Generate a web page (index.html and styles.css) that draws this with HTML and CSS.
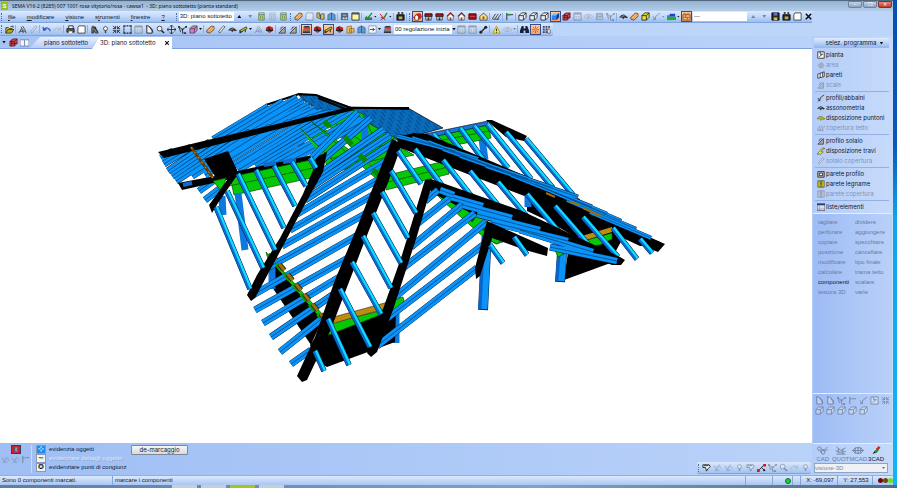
FILE: index.html
```html
<!DOCTYPE html>
<html lang="it">
<head>
<meta charset="utf-8">
<title>SEMA - piano sottotetto</title>
<link rel="stylesheet" href="styles.css">
</head>
<body>
<svg class="sprite" aria-hidden="true">
  <symbol id="folder" viewBox="0 0 10 10"><path d="M1 9V3h3l1 1h3v2" fill="#e8d33c" stroke="#333"/><path d="M1 9l2-4h7L7 9z" fill="#b8a818" stroke="#222" stroke-width=".8"/><path d="M6 2l3-1v2" stroke="#222" fill="none" stroke-width=".8"/></symbol>
  <symbol id="stamp" viewBox="0 0 10 10"><path d="M1 9l3-5 2 5M5 1l2 3 2 5M2 7h6M3 2l2 2" stroke="#444" fill="none"/><circle cx="7" cy="6" r="1.5" fill="#888"/></symbol>
  <symbol id="undo" viewBox="0 0 10 10"><path d="M2 5q4-4 7 1v1M1 2l1 4 3-1" stroke="#2748b8" fill="none" stroke-width="1.2"/></symbol>
  <symbol id="redo" viewBox="0 0 10 10"><path d="M8 5q-4-4-7 1v1M9 2l-1 4-3-1" stroke="#7d9bd8" fill="none" stroke-width="1.2"/></symbol>
  <symbol id="print" viewBox="0 0 10 10"><path d="M3 4V1h5v3" fill="#fff" stroke="#222"/><path d="M1 4h8v4H1z" fill="#555" stroke="#222"/><path d="M3 7h4v2H3z" fill="#fff"/></symbol>
  <symbol id="page" viewBox="0 0 10 10"><path d="M2 1h7v8H1V3z" fill="#fff" stroke="#333" stroke-width=".9"/></symbol>
  <symbol id="hand" viewBox="0 0 10 10"><path d="M2 9V3l1-2 2 3 1-2 1 3 2 4H6L4 6v3z" fill="#777" stroke="#222" stroke-width=".8"/><path d="M4 1l5 7" stroke="#222"/></symbol>
  <symbol id="bulb" viewBox="0 0 10 10"><circle cx="5" cy="4" r="2.2" fill="#fff" stroke="#444"/><path d="M5 6v3" stroke="#444" stroke-width="1.6"/></symbol>
  <symbol id="fit" viewBox="0 0 10 10"><path d="M1 1l3 3V1M9 1L6 4V1M1 9l3-3v3M9 9L6 6v3M1 4h3M6 4h3M1 6h3M6 6h3" stroke="#222" fill="none" stroke-width=".9"/></symbol>
  <symbol id="frame" viewBox="0 0 10 10"><path d="M1 3V1h2M7 1h2v2M9 7v2H7M3 9H1V7M4 1h2M4 9h2M1 4v2M9 4v2" stroke="#222" fill="none" stroke-width="1.2"/></symbol>
  <symbol id="doc" viewBox="0 0 10 10"><path d="M1 1h3M2 1v8h6V5L4 1" fill="#eef" stroke="#222"/><path d="M5 2l4 6" stroke="#222"/></symbol>
  <symbol id="mag" viewBox="0 0 10 10"><circle cx="4" cy="4" r="2.7" fill="#eef" stroke="#444"/><path d="M6 6l3 3" stroke="#222" stroke-width="1.6"/></symbol>
  <symbol id="move" viewBox="0 0 10 10"><path d="M5 0v10M0 5h10M3 2l2-2 2 2M3 8l2 2 2-2M2 3L0 5l2 2M8 3l2 2-2 2" stroke="#222" fill="none" stroke-width=".9"/></symbol>
  <symbol id="poly" viewBox="0 0 10 10"><path d="M1 2l4 3 4-3M5 5v4h3M1 2l2 6" stroke="#333" fill="none"/><path d="M0 1h2v2H0zM4 4h2v2H4zM8 1h2v2H8zM7 8h2v2H7z" fill="#333"/></symbol>
  <symbol id="cube" viewBox="0 0 10 10"><path d="M1 4l3-3h5v5L6 9H1zM1 4h5v5M6 4l3-3" fill="#e8eefa" stroke="#222" stroke-width=".9"/></symbol>
  <symbol id="bluecube" viewBox="0 0 10 10"><path d="M1 4l3-3h5v5L6 9H1z" fill="#2b83f4"/><path d="M1 4l3-3h5L6 4z" fill="#7cc4ff"/><path d="M6 4l3-3v5L6 9z" fill="#123a9a"/></symbol>
  <symbol id="pinkcube" viewBox="0 0 10 10"><path d="M1 4l3-3h5v5L6 9H1zM1 4h5v5M6 4l3-3" fill="#d77ac0" stroke="#444" stroke-width=".8"/></symbol>
  <symbol id="redcube" viewBox="0 0 10 10"><path d="M1 4l3-3h5v5L6 9H1zM1 4h5v5M6 4l3-3M2 6h7M3 2v7" fill="#d5455a" stroke="#511" stroke-width=".8"/></symbol>
  <symbol id="yelcube" viewBox="0 0 10 10"><path d="M1 4l3-3h5v5L6 9H1zM1 4h5v5M6 4l3-3" fill="#e5e02c" stroke="#222" stroke-width=".9"/></symbol>
  <symbol id="plank" viewBox="0 0 10 10"><path d="M1 6l5-5 3 1v3L4 9 1 8z" fill="#e5984a" stroke="#5b3212" stroke-width=".8"/><path d="M2 7l5-5M4 8l5-5" stroke="#f8ce94"/></symbol>
  <symbol id="beam" viewBox="0 0 10 10"><path d="M1 6l7-4 1 2-7 4z" fill="#c8cc20" stroke="#222" stroke-width=".8"/><path d="M1 6v3l3-2M7 5v3" stroke="#222" fill="none"/></symbol>
  <symbol id="slab" viewBox="0 0 10 10"><path d="M3 9L2 7l5-6 2 1z" fill="#eee" stroke="#444" stroke-width=".8"/></symbol>
  <symbol id="roof" viewBox="0 0 10 10"><path d="M0 6q3-4 6-3l4 3-2 1-2-1-1 2-2-2z" fill="#333"/><path d="M3 5l3-1" stroke="#aaa"/></symbol>
  <symbol id="house" viewBox="0 0 10 10"><path d="M1 5l4-4 4 4" fill="none" stroke="#a01616" stroke-width="1.3"/><path d="M2 5l3-3 3 3v4H2z" fill="#fff" stroke="#333" stroke-width=".7"/><path d="M4 6h2v3H4z" fill="#a33"/></symbol>
  <symbol id="redhouse" viewBox="0 0 10 10"><path d="M0 6l4-4 4-1 2 4-2 3H2z" fill="#c52a20"/><path d="M2 5l2-2 2 2v4H2z" fill="#fff" stroke="#511" stroke-width=".7"/></symbol>
  <symbol id="flathouse" viewBox="0 0 10 10"><path d="M1 2h8v3H1z" fill="#a51820" stroke="#400"/><path d="M2 5h6v4H2z" fill="#ddd" stroke="#222" stroke-width=".8"/><path d="M4 6h2v3H4z" fill="#333"/></symbol>
  <symbol id="redbox" viewBox="0 0 10 10"><path d="M1 2h8v6H1z" fill="#9d1520" stroke="#500"/><path d="M2 5h6" stroke="#e55" stroke-width=".7"/></symbol>
  <symbol id="mark" viewBox="0 0 10 10"><path d="M2 1h6v8H2z" fill="#4c5578"/><path d="M4 3h3M4 5h2M4 7h3" stroke="#e8ecf8"/></symbol>
  <symbol id="yelhouse" viewBox="0 0 10 10"><path d="M1 5l4-4 4 4v4H1z" fill="#f8e36a" stroke="#345" stroke-width=".9"/><path d="M4 5h2v3H4z" fill="#c23"/></symbol>
  <symbol id="hatch" viewBox="0 0 10 10"><path d="M0 8l4-6M3 8l4-6M6 8l4-6M1 8h7" stroke="#444" stroke-width="1"/></symbol>
  <symbol id="flag" viewBox="0 0 10 10"><path d="M2 1v8M2 3h7" stroke="#222"/><path d="M3 2h3v2H3z" fill="#2a3"/></symbol>
  <symbol id="bin" viewBox="0 0 10 10"><path d="M2 3h6v6H2z" fill="#e8de28" stroke="#575" stroke-width=".9"/><path d="M2 3V1h6v2M4 4v4M6 4v4" stroke="#585" fill="none" stroke-width=".9"/></symbol>
  <symbol id="win" viewBox="0 0 10 10"><path d="M1 1h8v8H1z" fill="#dde4ee" stroke="#333"/><path d="M1 2h8" stroke="#345" stroke-width="1.6"/><path d="M3 5h1M6 5h1M3 7h1M6 7h1" stroke="#333"/></symbol>
  <symbol id="split" viewBox="0 0 10 10"><path d="M0 2h10v7H0zM5 2v7" fill="#f2f6ff" stroke="#7486a8"/></symbol>
  <symbol id="grid" viewBox="0 0 10 10"><path d="M1 1h8v8H1z" fill="#567"/><path d="M3 3h4v1H3zM3 6h2v2H3zM6 6h2v2H6z" fill="#dde"/></symbol>
  <symbol id="note" viewBox="0 0 10 10"><path d="M1 1h8v8H1z" fill="#fff6a0" stroke="#333"/><path d="M1 2h8" stroke="#345" stroke-width="1.4"/></symbol>
  <symbol id="check" viewBox="0 0 10 10"><path d="M1 6h8v3H1z" fill="#567"/><path d="M2 5l2 2 5-6" stroke="#17a017" fill="none" stroke-width="1.5"/></symbol>
  <symbol id="checkred" viewBox="0 0 10 10"><path d="M2 6l3 1 4-6" stroke="#17a017" fill="none" stroke-width="1.5"/><path d="M1 2l6 7M7 5L2 9" stroke="#c22" stroke-width="1.1"/></symbol>
  <symbol id="save" viewBox="0 0 10 10"><path d="M1 1h8v8H1z" fill="#2b2b22" stroke="#111"/><path d="M3 1h4v3H3z" fill="#6d6ae8"/><path d="M3 6h4v3H3z" fill="#c8bf60"/></symbol>
  <symbol id="savedark" viewBox="0 0 10 10"><path d="M1 3h8v6H1z" fill="#2b2b22" stroke="#111"/><path d="M2 0h2v3H2zM6 0h2v3H6z" fill="#444"/><path d="M3 5h4v3H3z" fill="#b8b060"/></symbol>
  <symbol id="tools" viewBox="0 0 10 10"><path d="M1 1h3v4l2-3h3v6H6L1 6z" fill="#d8c050" stroke="#444" stroke-width=".8"/><path d="M5 3v5" stroke="#345"/></symbol>
  <symbol id="redtool" viewBox="0 0 10 10"><path d="M1 3l4-2 4 2v3L5 9 1 6z" fill="#d52020"/><path d="M1 6h8M3 2l4 5" stroke="#222" stroke-width="1.2"/></symbol>
  <symbol id="layers" viewBox="0 0 10 10"><path d="M1 3h8l-1-2H3zM1 5h8v1H1zM1 7h8v2H1z" fill="#333"/><path d="M2 4h7" stroke="#c22"/></symbol>
  <symbol id="sheet" viewBox="0 0 10 10"><path d="M1 2l5-1v8H1zM4 4h5v4H4z" fill="#e8c060" stroke="#a06020" stroke-width=".8"/></symbol>
  <symbol id="bluesheet" viewBox="0 0 10 10"><path d="M1 3l4-2v7L1 9zM5 1l4 2v6H5z" fill="#5d9bd0" stroke="#456" stroke-width=".7"/></symbol>
  <symbol id="step" viewBox="0 0 10 10"><path d="M1 9l7-7v7zM3 3l3-1M2 5l2-1" fill="#a8a8a8" stroke="#444"/></symbol>
  <symbol id="ystep" viewBox="0 0 10 10"><path d="M0 9l7-8 3 1-3 1-2 3h3L5 9z" fill="#e8ea30" stroke="#555" stroke-width=".8"/></symbol>
  <symbol id="arrowbox" viewBox="0 0 10 10"><path d="M1 1h8v8H1z" fill="#fff" stroke="#89a"/><path d="M2 5h5M5 3l2 2-2 2" stroke="#246" fill="none"/></symbol>
  <symbol id="wrench" viewBox="0 0 10 10"><path d="M2 8l5-5" stroke="#222" stroke-width="1.5"/><circle cx="2" cy="8" r="1.6" fill="#222"/><circle cx="7.500" cy="2.500" r="1.700" fill="#222"/></symbol>
  <symbol id="warn" viewBox="0 0 10 10"><path d="M5 1l4 8H1z" fill="#ffe92c" stroke="#a89010" stroke-width=".8"/><path d="M5 4v3M5 8v.8" stroke="#222"/></symbol>
  <symbol id="eye" viewBox="0 0 10 10"><path d="M0 5q5-5 10 0q-5 5-10 0" fill="#ccd" stroke="#888"/><circle cx="5" cy="5" r="1.4" fill="#888"/></symbol>
  <symbol id="bino" viewBox="0 0 10 10"><path d="M2 1h2v3h2V1h2l2 5v3H6V6H4v3H0V6z" fill="#182038"/></symbol>
  <symbol id="star" viewBox="0 0 10 10"><path d="M5 1v8M1 5h8M2 2l6 6M8 2L2 8" stroke="#b04c22" stroke-width=".8"/><circle cx="5" cy="5" r="2" fill="#e88f58"/></symbol>
  <symbol id="dots" viewBox="0 0 10 10"><path d="M1 1h2v2H1zM4 1h2v2H4zM7 1h2v2H7zM1 4h2v2H1zM4 4h2v2H4zM1 7h2v2H1zM4 7h2v2H4z" fill="#445"/><path d="M7 4l2 1v4H6z" fill="#fff" stroke="#222" stroke-width=".6"/></symbol>
  <symbol id="wall" viewBox="0 0 10 10"><path d="M1 3h8v6H1z" fill="#efb480" stroke="#a0522a"/><path d="M1 3l2-2 2 2 2-2 2 2M1 6h8M4 3v3M6 6v3" stroke="#a0522a" fill="none" stroke-width=".8"/></symbol>
  <symbol id="land" viewBox="0 0 10 10"><path d="M0 5h10v4H0z" fill="#19b425"/><path d="M0 4h3V2h6v3H0z" fill="#1c3fe0"/></symbol>
  <symbol id="close" viewBox="0 0 10 10"><path d="M2 2l6 6M8 2L2 8" stroke="#111" stroke-width="1.8"/></symbol>
  <symbol id="plus" viewBox="0 0 10 10"><path d="M1 3l3 4 2-4 3 3M2 8h5" stroke="#555" fill="none"/><circle cx="7" cy="3" r="1.4" fill="#999"/></symbol>
  <symbol id="glove" viewBox="0 0 10 10"><path d="M1 2h7l1 2-2 2-2 3-1-4H1z" fill="#fff" stroke="#222"/><path d="M2 3h5" stroke="#222"/></symbol>
  <symbol id="node" viewBox="0 0 10 10"><path d="M2 8l6-6M5 5l4 4" stroke="#222"/><path d="M7 1h3v3H7zM0 7h3v3H0z" fill="#d11"/><path d="M7 7h2v2H7z" fill="#111"/></symbol>
  <symbol id="plan" viewBox="0 0 10 10"><path d="M1 1h8v8H1z" fill="#fff" stroke="#222"/><path d="M4 1v3h3M3 7l4-3" stroke="#222" fill="none"/></symbol>
  <symbol id="panel" viewBox="0 0 10 10"><path d="M1 4l8-3v6L1 9zM4 3v5M7 2v5" fill="#fff" stroke="#222"/></symbol>
  <symbol id="chalet" viewBox="0 0 10 10"><path d="M0 6l4-4h3l3 4H8v3H2V6z" fill="#7a86a0"/></symbol>
  <symbol id="curve" viewBox="0 0 10 10"><path d="M1 9q4-1 3-4l5-4M1 5l3 4" stroke="#222" fill="none"/></symbol>
  <symbol id="yroof" viewBox="0 0 10 10"><path d="M0 6q3-4 6-3l4 3-2 1-2-1-1 2-2-2z" fill="#b5b818" stroke="#553" stroke-width=".6"/></symbol>
  <symbol id="wallbox" viewBox="0 0 10 10"><path d="M1 2h8v7H1z" fill="#bbb" stroke="#222"/><path d="M3 4h4v3H3z" fill="#fff" stroke="#222"/></symbol>
  <symbol id="ywall" viewBox="0 0 10 10"><path d="M1 1h8v8H1z" fill="#d3cf20" stroke="#554"/><path d="M4 1v8M6 1v8M4 4h2" stroke="#443" stroke-width=".9"/></symbol>
  <symbol id="table" viewBox="0 0 10 10"><path d="M0 1h10v8H0z" fill="#fff" stroke="#334"/><path d="M0 2h10" stroke="#23408e" stroke-width="2"/><path d="M0 5h10M0 7h10M3 3v6" stroke="#889" stroke-width=".7"/></symbol>
  <symbol id="pen" viewBox="0 0 10 10"><path d="M1 9l3-4 2 2z" fill="#111"/><path d="M3 6l3-3 2 2-3 3z" fill="#159a20"/><path d="M5 3l3-3 2 2-3 3z" fill="#d82020"/></symbol>
  <symbol id="cad" viewBox="0 0 14 10"><circle cx="3" cy="3" r="2" fill="none" stroke="#7080a0"/><circle cx="7" cy="7" r="2" fill="none" stroke="#7080a0"/><path d="M5 4h4l3-3M8 6l4-2M3 5l3 3" stroke="#7080a0" fill="none"/></symbol>
  <symbol id="quot" viewBox="0 0 14 10"><path d="M2 1l5 4 5-3M1 5l5 2 6-1M2 9h10M4 3v5M9 3v6" stroke="#7080a0" fill="none"/></symbol>
  <symbol id="mcad" viewBox="0 0 14 10"><path d="M1 5l3-3h6l3 3-3 3H4zM4 2v6M7 1v8M10 2v6M1 5h12" stroke="#7080a0" fill="none"/></symbol>
</svg>

<div class="screen">
<div class="app">
  <header class="title">
    <span class="logo">S</span><h1>SEMA V16-2 (8285) 007 1001 rosa vitytorio/rosa - cawsa1&nbsp; - 3D: piano sottotetto (pianta standard)</h1>
    <div class="winbtns"><button aria-label="Riduci">–</button><button aria-label="Ripristina">❐</button><button class="x" aria-label="Chiudi">✕</button></div>
  </header>

  <div class="bar">
    <i class="grip"></i>
    <nav class="menu"><a href="#"><u>f</u>ile</a><a href="#"><u>m</u>odificare</a><a href="#"><u>v</u>isione</a><a href="#">s<u>t</u>rumenti</a><a href="#"><u>f</u>inestre</a><a href="#"><u>?</u></a></nav>
    <i class="grip"></i>
    <input class="field view" aria-label="Vista" value="3D: piano sottotetto">
    <button class="b" aria-label="Su"><i class="tri up"></i></button><button class="b off" aria-label="Giù"><i class="tri"></i></button>
    <button class="b"><svg><use href="#bin"/></svg></button><button class="b off"><svg><use href="#bin"/></svg></button><button class="b"><svg><use href="#bin"/></svg></button>
    <i class="grip"></i>
    <button class="b"><svg><use href="#plank"/></svg></button><button class="b off"><svg><use href="#page"/></svg></button><button class="b"><svg><use href="#tools"/></svg></button><button class="b"><svg><use href="#bluesheet"/></svg></button>
    <i class="sep"></i>
    <button class="b"><svg><use href="#grid"/></svg></button><button class="b"><svg><use href="#note"/></svg></button>
    <i class="sep"></i>
    <button class="b drop"><svg><use href="#check"/></svg><i class="tri"></i></button><button class="b drop"><svg><use href="#checkred"/></svg><i class="tri"></i></button>
    <i class="sep"></i><button class="b"><svg><use href="#savedark"/></svg></button>
    <i class="sep"></i><i class="grip"></i>
    <button class="b on"><svg><use href="#redhouse"/></svg></button><button class="b"><svg><use href="#flathouse"/></svg></button><button class="b"><svg><use href="#flathouse"/></svg></button><button class="b"><svg><use href="#house"/></svg></button><button class="b"><svg><use href="#house"/></svg></button><button class="b"><svg><use href="#redbox"/></svg></button><button class="b"><svg><use href="#yelhouse"/></svg></button>
    <i class="sep"></i><button class="b"><svg><use href="#hatch"/></svg></button>
    <i class="sep"></i><button class="b"><svg><use href="#flag"/></svg></button>
    <i class="sep"></i><button class="b"><svg><use href="#cube"/></svg></button><button class="b"><svg><use href="#cube"/></svg></button><button class="b"><svg><use href="#cube"/></svg></button><button class="b on"><svg><use href="#bluecube"/></svg></button><button class="b"><svg><use href="#redcube"/></svg></button>
    <button class="b off"><svg><use href="#win"/></svg></button><button class="b off"><svg><use href="#eye"/></svg></button><button class="b off"><svg><use href="#grid"/></svg></button><button class="b off"><svg><use href="#poly"/></svg></button>
    <i class="sep"></i><button class="b"><svg><use href="#roof"/></svg></button><button class="b"><svg><use href="#plank"/></svg></button><button class="b"><svg><use href="#yelcube"/></svg></button><button class="b drop off"><svg><use href="#curve"/></svg><i class="tri"></i></button><button class="b drop"><svg><use href="#land"/></svg><i class="tri"></i></button><button class="b on"><svg><use href="#wall"/></svg></button>
    <input class="field line" aria-label="Linea" value="---">
    <button class="b off" aria-label="Su"><i class="tri up"></i></button><button class="b off" aria-label="Giù"><i class="tri"></i></button>
    <button class="b"><svg><use href="#save"/></svg></button><button class="b"><svg><use href="#savedark"/></svg></button><button class="b"><svg><use href="#page"/></svg></button><button class="b" aria-label="Chiudi"><svg><use href="#close"/></svg></button>
  </div>

  <div class="bar second">
    <i class="grip"></i>
    <button class="b"><svg><use href="#folder"/></svg></button><i class="sep"></i>
    <button class="b"><svg><use href="#stamp"/></svg></button><button class="b off"><svg><use href="#slab"/></svg></button><i class="sep"></i>
    <button class="b"><svg><use href="#undo"/></svg></button><button class="b off"><svg><use href="#redo"/></svg></button><i class="sep"></i>
    <button class="b"><svg><use href="#print"/></svg></button><button class="b"><svg><use href="#page"/></svg></button><i class="sep"></i>
    <button class="b"><svg><use href="#hand"/></svg></button><button class="b"><svg><use href="#bulb"/></svg></button><button class="b"><svg><use href="#fit"/></svg></button><button class="b"><svg><use href="#frame"/></svg></button><button class="b off"><svg><use href="#win"/></svg></button><button class="b"><svg><use href="#doc"/></svg></button><button class="b"><svg><use href="#mag"/></svg></button><button class="b"><svg><use href="#move"/></svg></button><button class="b"><svg><use href="#poly"/></svg></button>
    <button class="b drop"><svg><use href="#pinkcube"/></svg><i class="tri"></i></button><i class="sep"></i>
    <button class="b"><svg><use href="#plank"/></svg></button><button class="b"><svg><use href="#slab"/></svg></button><button class="b"><svg><use href="#roof"/></svg></button><button class="b drop"><svg><use href="#beam"/></svg><i class="tri"></i></button><button class="b off"><svg><use href="#stamp"/></svg></button><button class="b"><svg><use href="#redtool"/></svg></button><i class="sep"></i>
    <button class="b"><svg><use href="#step"/></svg></button><button class="b"><svg><use href="#step"/></svg></button><i class="sep"></i>
    <button class="b on"><svg><use href="#layers"/></svg></button><button class="b"><svg><use href="#redtool"/></svg></button><button class="b on"><svg><use href="#beam"/></svg></button><button class="b"><svg><use href="#redtool"/></svg></button><button class="b"><svg><use href="#sheet"/></svg></button>
    <button class="b"><svg><use href="#bluesheet"/></svg></button><button class="b drop"><svg><use href="#arrowbox"/></svg><i class="tri"></i></button><button class="b"><svg><use href="#layers"/></svg></button>
    <select class="field preset" aria-label="Regolazione"><option>00 regolazione inizia</option></select><i class="tri"></i>
    <button class="b off"><svg><use href="#win"/></svg></button><button class="b off"><svg><use href="#win"/></svg></button><button class="b"><svg><use href="#wrench"/></svg></button><i class="sep"></i>
    <button class="b"><svg><use href="#warn"/></svg></button><button class="b drop off"><svg><use href="#eye"/></svg><i class="tri"></i></button><i class="sep"></i>
    <button class="b"><svg><use href="#bino"/></svg></button><button class="b on"><svg><use href="#star"/></svg></button><button class="b"><svg><use href="#dots"/></svg></button>
  </div>

  <div class="body">
    <main class="work">
      <div class="tabs">
        <i class="tri"></i><button class="b"><svg><use href="#redcube"/></svg></button><button class="b"><svg><use href="#split"/></svg></button>
        <button class="tab"><span>piano sottotetto</span></button>
        <button class="tab active"><span>3D: piano sottotetto</span><svg><use href="#close"/></svg></button>
      </div>

      <div class="canvas">
      <svg class="model" viewBox="0 49 812 394" role="img" aria-label="Modello 3D della copertura">
        <defs>
          <pattern id="dense" width="9" height="4" patternUnits="userSpaceOnUse" patternTransform="rotate(14)"><rect width="9" height="4" fill="#0a90f4"/><path d="M0 1h9M0 3h9" stroke="#02284e" stroke-width=".7"/><path d="M1 0l5 4" stroke="#014" stroke-width=".5"/></pattern>
          <path id="backRafters" d="M268 106L213 139M283 101L222 138M297 97L236 134M303 100L250 131M309 104L264 128M315 108L279 125M322 111L293 121M331 112L308 118"/>
          <path id="leftRafters" d="M173 151L161 158M191 147L164 164M210 142L168 171M230 137L172 176M250 132L176 181M270 127L192 176M290 122L205 175M312 117L222 173M334 112L238 170M350 111L256 167M360 116L274 164M366 120L292 160M216 179L199 191M222 187L205 200"/>
          <path id="midRafters" d="M358 112L312 158M371 118L322 160M384 129L316 176M390 135L311 187M396 141L305 200M388 160L297 214M381 178L290 230M373 195L282 246M367 213L267 268M358 235L253 295M350 257L255 310M343 275L263 323M334 294L271 337M325 316L280 352M311 350L291 364"/>
          <path id="frontRafters" d="M438 190L425 201M451 197L418 223M463 204L411 247M475 213L403 268M486 222L395 297M483 245L385 320M477 268L377 346"/>
          <path id="leftJacks" d="M216 207L250 289M227 191L263 268M238 174L275 250M256 170L284 228M274 166L295 206M292 162L306 186M310 158L316 168"/>
          <path id="centreJacks" d="M398 151L421 184M391 171L416 213M382 192L408 238M373 213L401 263M363 236L391 288M352 262L381 314M340 289L370 347M328 319L349 365M315 351L324 371"/>
          <path id="rightJacks" d="M415 149L443 187M443 160L472 197M470 171L501 209M498 182L529 219M527 194L560 233M555 206L588 244M583 217L618 257M613 228L637 259M640 239L652 253"/>
          <path id="backJacks" d="M433 134L441 143M446 131L461 150M460 128L484 161M474 126L508 168M487 124L531 179M506 132L553 188M526 139L573 195"/>
          <path id="dormerJacks" d="M490 245L503 263M514 237L527 255"/>
          <path id="valley" d="M397 136L455 151M412 138L478 159M428 142L503 171M443 149L528 179M460 156L553 188M486 166L578 197M511 175L592 207M535 184L607 214M551 191L621 221M567 200L636 229M590 212L651 238"/>
          <path id="dormerRight" d="M440 190L454 195M451 197L483 206M463 205L512 218M477 214L540 230M491 222L568 241M520 230L593 252M550 247L617 261"/>
        </defs>
        <path d="M299 95L316 95L350 107L408 108L443 128L418 135L398 140L370 124L347 110L322 113L303 100z" fill="url(#dense)" stroke="#000" stroke-width=".7"/>
        <path d="M266 105L299 94L316 95L351 108L409 108M318 98L348 110M375 108L409 109" stroke="#000" stroke-width="2" fill="none"/>
        <path class="green" d="M302 124L315 119L352 157L334 171zM330 120L350 113L397 139L386 153L372 148zM353 110L363 114L391 176L380 174L318 116zM208 148L246 140L214 156z"/>
        <path d="M300 125L302 159M364 119L366 147" class="post"/>
        <use href="#backRafters" class="bo"/><use href="#backRafters" class="bf"/><use href="#backRafters" class="bl"/>
        <use href="#leftRafters" class="bo wide"/><use href="#leftRafters" class="bf"/><use href="#leftRafters" class="bl"/>
        <path d="M158 152L212 139L350 107L354 110L342 113L212 146L164 158z"/>
        <path d="M204 159L228 151L238 172L216 178zM178 183L215 176L270 164L327 152L327 160L240 177L182 190z"/>
        <path d="M191 147L213 178" stroke="#5f3f08" stroke-width="3"/><path d="M191 147L213 178" stroke="#b18218" stroke-width="1.2" stroke-dasharray="2 4"/>
        <path d="M183 185L192 183M264 165L276 163M283 162L296 160" stroke="#1469d0" stroke-width="4"/>
        <path class="green" d="M230 177L315 159L320 176L234 195zM229 186L318 167"/>
        <path class="green" d="M213 181L226 178L222 192z"/>
        <path class="green" d="M325 160L394 143L400 153L329 174zM388 175L449 160L449 174L386 190z"/><path class="green" d="M388 182L448 167M401 148L414 155L400 158z"/>
        <path d="M238 193L245 250M222 196L223 215" class="post"/>
        <path d="M230 176L238 174L218 203L212 213L209 205z"/>
        <path class="green" d="M266 252L324 316L320 324L270 266z"/>
        <path d="M272 262L322 320L311 345L272 287z"/>
        <path class="post" d="M272 268V289M396 313V343"/>
        <path class="green" d="M300 128L340 168L335 174M312 122L384 176L380 182z"/>
        <use href="#midRafters" class="bo wide"/><use href="#midRafters" class="bf"/><use href="#midRafters" class="bl"/>
        <path d="M345 137L352 145M359 155L366 161M373 170L381 177M324 121L330 127" stroke="#068a06" stroke-width="5"/>
        <path d="M268 254L321 318" stroke="#0a9e0a" stroke-width="4" stroke-dasharray="8 5"/><path d="M271 254L324 318" stroke="#3a2605" stroke-width="5" stroke-dasharray="8 5"/><path d="M271 254L324 318" stroke="#94700f" stroke-width="3" stroke-dasharray="8 5"/>
        <path d="M310 345L328 322L396 310L395 342L327 367L316 361z"/>
        <path class="green" d="M326 336L329 323L393 308L391 300L403 297L404 301L394 312L380 315z"/>
        <path d="M330 318L392 301L391 307L331 324z" fill="#bd8c10" stroke="#432" stroke-width=".7"/>
        <path d="M319 156L327 152L323 172L304 206L283 246L255 298L251 301L247 295L257 275L280 238L303 194z"/>
        <use href="#leftJacks" class="co"/><use href="#leftJacks" class="cf"/><use href="#leftJacks" class="cc" x=".9" y="-.5"/>

        <path d="M482 139L485 160" class="post"/>
        <path class="green" d="M434 135L488 124L491 138L446 147zM438 141L489 131"/>
        <path d="M425 134L488 121L488 125L428 138z" fill="#1976dd" stroke="#000" stroke-width=".6"/>
        <path d="M486 120L492 120L527 136L524 141L506 137z"/>
        <use href="#backJacks" class="co"/><use href="#backJacks" class="cf"/><use href="#backJacks" class="cc" x=".9" y="-.5"/>
        <path d="M414 133L427 134L580 199L577 205L665 244L658 252L640 245L527 197L398 147L397 137z"/>
        <path d="M527 192L660 242L640 246L623 238L612 258L546 220L527 211z"/>
        <path d="M528 195V207" class="post"/>
        <use href="#valley" class="vo"/><use href="#valley" class="vf"/><use href="#valley" class="vl"/>
        <path d="M546 193L555 197M570 202L580 205M583 208L601 216" stroke="#9b6d10" stroke-width="2"/>
        <path d="M575 238L612 227V232L580 242z" fill="#bd8c10"/><path class="green" d="M587 240L612 233V239L600 245L590 246z"/>
        <use href="#rightJacks" class="co"/><use href="#rightJacks" class="cf"/><use href="#rightJacks" class="cc" x=".9" y="-.5"/>

        <path d="M568 252L616 261L564 280z"/>
        <path class="postedge" d="M562 253L560 282M487 230L483 310"/><path class="post tall" d="M562 253L560 281M487 230L483 309"/><path class="postside" d="M559 253L557 281M484 230L480 309"/>
        <path class="green" d="M434 192L447 191L504 234L503 242L496 244L480 234L444 202z"/>
        <path class="green" d="M491 232L500 231L504 238L497 244L491 241zM555 250L564 254L558 257z"/>
        <path d="M445 197L496 236" stroke="#064f08" stroke-width="7" stroke-dasharray="5 11"/>
        <path d="M425 180L431 179L522 211L620 257L625 260L621 265L612 265L590 256L480 218L431 192z"/>
        <use href="#frontRafters" class="bo wide"/><use href="#frontRafters" class="bf"/><use href="#frontRafters" class="bl"/>
        <use href="#dormerRight" class="bo wide"/><use href="#dormerRight" class="bf"/><use href="#dormerRight" class="bl"/>
        <path d="M487 221L548 248L547 256L525 250L492 238L480 276L476 279L475 268z"/>
        <use href="#dormerJacks" class="co"/><use href="#dormerJacks" class="cf"/><use href="#dormerJacks" class="cc" x=".9" y="-.5"/>
        <path d="M425 180L433 181L417 236L393 310L377 352L371 357L367 353L382 312L402 255z"/>
        <path d="M392 139L402 144L389 180L362 248L331 329L307 380L302 382L297 376L315 337L335 280L358 225z"/>
        <use href="#centreJacks" class="co"/><use href="#centreJacks" class="cf"/><use href="#centreJacks" class="cc" x=".9" y="-.5"/>
      </svg>
      </div>

      <section class="marks">
        <div class="mode"><button class="red" aria-label="Marca"><svg><use href="#mark"/></svg></button><div class="minis off"><svg><use href="#plus"/></svg><svg><use href="#plus"/></svg><svg><use href="#flag"/></svg></div></div>
        <div class="opts">
          <button class="opt"><span class="box sel">⊹</span>evidenzia oggetti</button>
          <button class="opt dim"><span class="box">~</span>evidenziare dettagli oggetto</button>
          <button class="opt"><span class="box">✪</span>evidenziare punti di congiunz</button>
        </div>
        <button class="demark">de-marcaggio</button>
        <div class="snap"><i class="grip"></i><button class="b"><svg><use href="#glove"/></svg></button><button class="b off"><svg><use href="#plus"/></svg></button><button class="b off"><svg><use href="#plus"/></svg></button><button class="b off"><svg><use href="#bulb"/></svg></button><button class="b off"><svg><use href="#glove"/></svg></button><button class="b"><svg><use href="#node"/></svg></button><button class="b off"><svg><use href="#poly"/></svg></button><button class="b off"><svg><use href="#mag"/></svg></button><button class="b off"><svg><use href="#redo"/></svg></button><button class="b off"><svg><use href="#bulb"/></svg></button></div>
      </section>
    </main>

    <aside class="side">
      <button class="prog">selez. programma<i class="tri"></i></button>
      <ul><li><a href="#"><svg><use href="#plan"/></svg>pianta</a></li><li class="dim"><a href="#"><svg><use href="#chalet"/></svg>area</a></li><li><a href="#"><svg><use href="#panel"/></svg>pareti</a></li><li class="dim"><a href="#"><svg><use href="#step"/></svg>scale</a></li></ul>
      <ul><li><a href="#"><svg><use href="#curve"/></svg>profili/abbaini</a></li><li><a href="#"><svg><use href="#roof"/></svg>assonometria</a></li><li><a href="#"><svg><use href="#yroof"/></svg>disposizione puntoni</a></li><li class="dim"><a href="#"><svg><use href="#hatch"/></svg>copertura tetto</a></li></ul>
      <ul><li><a href="#"><svg><use href="#step"/></svg>profilo solaio</a></li><li><a href="#"><svg><use href="#ystep"/></svg>disposizione travi</a></li><li class="dim"><a href="#"><svg><use href="#slab"/></svg>solaio copertura</a></li></ul>
      <ul><li><a href="#"><svg><use href="#wallbox"/></svg>parete profilo</a></li><li><a href="#"><svg><use href="#ywall"/></svg>parete legname</a></li><li class="dim"><a href="#"><svg><use href="#ywall"/></svg>parete copertura</a></li></ul>
      <ul><li><a href="#"><svg><use href="#table"/></svg>liste/elementi</a></li></ul>
      <div class="cmds">
        <button>tagliare</button><button>dividere</button><button>perforare</button><button>aggiungere</button><button>copiare</button><button>specchiare</button><button>posizione</button><button>cancellare</button><button>modificare</button><button>tipo finale</button><button>calcolare</button><button>trama tetto</button><button class="cur">componenti</button><button>scalare</button><button>testura 3D</button><button>varie</button>
      </div>
      <div class="draw off"><svg><use href="#doc"/></svg><svg><use href="#doc"/></svg><svg><use href="#poly"/></svg><svg><use href="#flag"/></svg><svg><use href="#curve"/></svg><svg><use href="#plan"/></svg><svg><use href="#fit"/></svg><svg><use href="#cube"/></svg><svg><use href="#cube"/></svg><svg><use href="#cube"/></svg><svg><use href="#cube"/></svg><svg><use href="#cube"/></svg></div>
      <div class="cads"><button><svg><use href="#cad"/></svg>CAD</button><button><svg><use href="#quot"/></svg>QUOT</button><button><svg><use href="#mcad"/></svg>MCAD</button><button class="cur"><svg><use href="#pen"/></svg>3CAD</button></div>
      <div class="vis"><select aria-label="Visione"><option>visione-3D</option></select><i class="tri"></i></div>
    </aside>
  </div>

  <footer class="status"><span class="s1">Sono 0 componenti marcati.</span><span class="s2">marcare i componenti</span><span class="s3"></span><span class="s4"><i class="led"></i></span><span class="s5"></span><span class="s6">X: -69,097</span><span class="s7">Y: 27,553</span><span class="s8"><i></i><i></i><i></i></span></footer>
</div>
<div class="desk"></div>
<div class="task"><i></i><i></i><i class="lime"></i><i></i></div>
</div>
</body>
</html>
```

FILE: styles.css
```css
* { box-sizing: border-box; }
html, body { height: 100%; margin: 0; }
body { font: 6px/10px "Liberation Sans", Arial, sans-serif; color: #10182c; overflow: hidden; }
button, input, select { font: inherit; color: inherit; margin: 0; padding: 0; border: 0; background: none; border-radius: 0; appearance: none; white-space: nowrap; }
a { color: inherit; text-decoration: none; }
ul { list-style: none; margin: 0; padding: 0; }
svg { display: block; flex: none; width: 9px; height: 9px; }
.sprite { position: absolute; width: 0; height: 0; }

.screen { height: 100%; display: grid; grid-template: 1fr 3px / 1fr 4px; }
.app { display: flex; flex-direction: column; min-width: 0; min-height: 0; background: #bdd5f8; }
.desk { background: linear-gradient(#0950ae, #0b58b8 30%, #10a4e8 45%, #13b4f4); }
.task { grid-column: 1 / -1; background: linear-gradient(90deg, #5b7fa6, #7ea2c8 60%, #4f6a85); display: flex; gap: 4px; padding-left: 172px; }
.task i { width: 25px; background: #c4cfda; }
.task .lime { background: #a4c422; }

.title { height: 11px; display: flex; align-items: center; background: linear-gradient(#53687f 0, #53687f 1px, #93b2d2 1px, #b4cdea); padding-left: 1px; }
.title h1 { font: 5px/8px "Noto Sans", sans-serif; margin: 0; flex: 1; padding-left: 4px; color: #0c1018; white-space: nowrap; }
.logo { width: 7px; height: 8px; background: #98c01c; color: #fff; font: bold 6px/8px "Liberation Sans", sans-serif; text-align: center; }
.winbtns { display: flex; gap: 1px; align-self: flex-start; padding: 1px 1px 0 0; }
.winbtns button { width: 14px; height: 7px; font-size: 5px; line-height: 5px; color: #fff; background: linear-gradient(#c3d3e6, #8aa5c4); border: 1px solid #6b83a0; border-radius: 0 0 2px 2px; }
.winbtns .x { background: linear-gradient(#e08a7c, #c43a26); border-color: #7d3429; }

.bar { height: 12px; margin-right: 81px; display: flex; align-items: center; background: linear-gradient(#dbe9fe, #c1d8fa 50%, #9cbdee); border-bottom: 1px solid #7fa3dc; }
.second { height: 13px; align-self: flex-start; margin: 0; border-radius: 0 2px 2px 0; padding-right: 1px; }
.grip { flex: none; width: 2px; height: 8px; margin: 0 1px; border-left: 1px dotted #4a6db0; }
.sep { flex: none; width: 1px; height: 8px; background: #8fb0e4; margin-right: 1px; }
.menu { display: flex; gap: 11px; padding: 0 10px 0 4px; }
.field { background: #fff; height: 9px; line-height: 9px; padding-left: 1px; overflow: hidden; }
.view { width: 55px; }
.line { width: 54px; margin: 0 1px; }
.preset { width: 58px; margin-left: 1px; }
.b { flex: none; width: 11px; height: 11px; display: flex; align-items: center; justify-content: center; }
.b.drop { width: 15px; gap: 1px; }
.b.on { background: linear-gradient(#ffd0a0, #f5a468); border: 1px solid #3a4b86; }
.off svg, .off > .tri { opacity: .4; filter: grayscale(1); }
.tri { flex: none; width: 4px; height: 3px; background: #111; clip-path: polygon(0 0, 100% 0, 50% 100%); }
.tri.up { clip-path: polygon(50% 0, 100% 100%, 0 100%); }
.drop .tri { width: 3px; height: 2px; }

.body { flex: 1; display: grid; grid-template-columns: 1fr 81px; min-height: 0; }
.work { display: flex; flex-direction: column; min-width: 0; min-height: 0; }
.tabs { height: 13px; display: flex; align-items: flex-end; background: linear-gradient(90deg, #a6c3f4, #b9d2f9); border-bottom: 1px solid #7fa3dc; padding-left: 2px; font-family: Inter, sans-serif; }
.tabs > .tri { align-self: center; margin-right: 2px; }
.tab { height: 11px; display: flex; align-items: center; padding: 0 5px 0 14px; background: linear-gradient(#e6f0ff, #b4cefa); clip-path: polygon(10px 0, 100% 0, calc(100% - 8px) 100%, 0 100%); width: 69px; }
.tab.active { width: 80px; background: #fff; clip-path: polygon(7px 0, 100% 0, 100% 100%, 0 100%); justify-content: space-between; padding: 0 2px 0 8px; margin-left: -7px; height: 12px; margin-bottom: -1px; }
.tab svg { width: 6px; height: 6px; }

.canvas { flex: 1; min-height: 0; background: #fff; }
.model { width: 100%; height: 100%; }
.model use { fill: none; }
.bo { stroke: #00223f; stroke-width: 6; }
.bo.wide { stroke-width: 7; }
.bf { stroke: #0a93f8; stroke-width: 5.4; }
.wide + .bf { stroke-width: 6.2; }
.bl { stroke: #013a70; stroke-width: .7; }
.vo { stroke: #00182c; stroke-width: 4.6; }
.vf { stroke: #0a93f8; stroke-width: 3.6; }
.vl { stroke: #013a70; stroke-width: .6; }
.co { stroke: #001a38; stroke-width: 5.6; }
.cf { stroke: #0a6ad4; stroke-width: 4.8; }
.cc { stroke: #10dcfc; stroke-width: 2.2; }
.post { stroke: #0d78de; stroke-width: 7; fill: none; }
.postedge { stroke: #012a50; stroke-width: 10; }
.post.tall { stroke: #0a93f8; stroke-width: 9; }
.postside { stroke: #0a64c8; stroke-width: 3; }
.green { fill: #06c806; stroke: #044d04; stroke-width: .7; }

.marks { height: 32px; display: flex; align-items: flex-start; padding-top: 2px; background: linear-gradient(90deg, #9fbef4, #b9d2f9); }
.mode { width: 32px; height: 28px; display: flex; flex-direction: column; align-items: center; border-right: 1px solid #c9dcfb; }
.red { width: 10px; height: 9px; background: #e01a20; border: 1px solid #343c60; }
.red svg { width: 8px; height: 7px; }
.minis { display: flex; gap: 1px; padding-top: 1px; }
.opts { width: 99px; padding-left: 4px; }
.opt { display: flex; align-items: center; height: 9px; line-height: 9px; gap: 3px; }
.box { width: 10px; height: 9px; background: #f3f3f0; border: 1px solid #8a98b4; font: bold 7px/7px "DejaVu Sans", sans-serif; text-align: center; overflow: hidden; }
.box.sel { background: #1e8cf4; color: #fff; }
.opt.dim { color: #dfe9fb; text-shadow: 1px 1px 0 #8fa6cf; }
.opt.dim .box { color: #10182c; text-shadow: none; }
.demark { width: 57px; height: 10px; line-height: 8px; background: linear-gradient(#f6f6f6, #d8dade); border: 1px solid #7d8796; border-radius: 1px; font-family: Inter, sans-serif; }
.snap { display: flex; align-items: center; margin: 17px 1px 0 auto; height: 12px; background: linear-gradient(#dbe9fe, #a3c2f0); border-bottom: 1px solid #7fa3dc; border-radius: 2px; }

.side { display: flex; flex-direction: column; padding: 2px 1px 0 1px; background: linear-gradient(90deg, #b4cdf8, #c6dafa); min-height: 0; }
.prog { height: 10px; margin: 0 3px 2px 1px; display: flex; align-items: center; justify-content: center; gap: 3px; padding-left: 6px; background: linear-gradient(#dfecff, #92b5ee); font-family: Inter, sans-serif; }
.side ul { font-family: Inter, sans-serif; padding: 0 0 1px 2px; margin: 0 3px 1px 2px; border-bottom: 1px solid #94b0e0; }
.side li a { display: flex; gap: 1px; align-items: center; height: 10px; white-space: nowrap; }
.side li svg { width: 8px; height: 8px; }
.side li.dim { color: #7e94bc; }
.side li.dim svg { opacity: .45; filter: grayscale(1); }
.side ul:nth-of-type(5) { border: 0; margin-bottom: 0; }
.cmds { border-top: 1px solid #e4eefe; display: grid; grid-template-columns: 37px 1fr; align-content: start; padding: 3px 0 0 5px; flex: 1; background: linear-gradient(90deg, #9dbbf5, #b9d0f8); color: #667aa4; }
.cmds button { text-align: left; height: 10px; line-height: 10px; overflow: hidden; }
.cmds .cur, .cads .cur { color: #0b1430; }
.draw { border-top: 1px solid #e4eefe; display: grid; grid-template-columns: repeat(7, 11px); grid-auto-rows: 10px; align-content: start; padding: 2px 0 0 2px; height: 50px; background: linear-gradient(90deg, #9dbbf5, #b9d0f8); }
.cads { border-top: 1px solid #e4eefe; height: 20px; display: grid; grid-template-columns: repeat(4, 1fr); padding: 2px 7px 0 1px; color: #667aa4; }
.cads button { display: flex; flex-direction: column; align-items: center; line-height: 8px; }
.cads svg { width: 14px; height: 9px; }
.vis { margin: 0 4px 2px 1px; height: 10px; display: flex; align-items: center; background: #eef1f6; border: 1px solid #8fa3c4; color: #7c8698; padding-right: 2px; }
.vis select { flex: 1; height: 8px; line-height: 8px; }
.vis .tri { width: 3px; height: 2px; background: #68728a; }

.status { height: 10px; display: flex; align-items: center; background: linear-gradient(#dce9fe, #a9c6f2); border-top: 1px solid #8fb0e4; line-height: 9px; }
.status span { height: 9px; padding-left: 2px; border-right: 1px solid #86a4d6; display: flex; align-items: center; white-space: nowrap; }
.s1 { width: 113px; }
.s2 { flex: 1; }
.s3 { width: 27px; }
.s4 { width: 20px; justify-content: flex-end; }
.s5 { width: 8px; }
.s6 { width: 37px; }
.s7 { width: 35px; }
.s6, .s7 { justify-content: center; }
.s8 { width: 20px; }
.status .s8 { border: 0; justify-content: flex-end; }
.led { width: 6px; height: 6px; margin-right: 1px; border-radius: 50%; background: #18d030; border: 1px solid #187028; }
.s8 i { width: 5px; height: 5px; border-radius: 50%; background: #6d0a12; }
.s8 i:nth-child(2) { background: #6a4a10; }
.s8 i:nth-child(3) { background: #6be020; }
```
